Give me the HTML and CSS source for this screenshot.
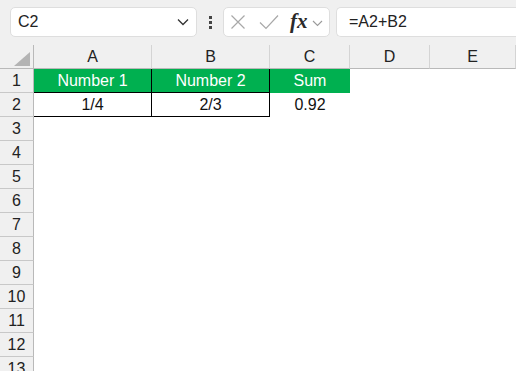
FILE: index.html
```html
<!DOCTYPE html>
<html>
<head>
<meta charset="utf-8">
<link rel="stylesheet" href="styles.css">
</head>
<body>
<div class="app">
  <div class="toolbar">
    <div class="namebox">
      <span class="ref">C2</span>
      <svg class="chev" width="12" height="8" viewBox="0 0 12 8"><path d="M1 1.5 L6 6.5 L11 1.5" fill="none" stroke="#333" stroke-width="1.3"/></svg>
    </div>
    <div class="dots"><i></i><i></i><i></i></div>
    <div class="fxbox">
      <svg class="ico" width="16" height="16" viewBox="0 0 16 16"><path d="M1.5 1.5 L14.5 14.5 M14.5 1.5 L1.5 14.5" stroke="#a8a8a8" stroke-width="1.2" fill="none"/></svg>
      <svg class="ico" width="20" height="16" viewBox="0 0 20 16"><path d="M1 8.5 L7 14.5 L19 1.5" stroke="#a8a8a8" stroke-width="1.2" fill="none"/></svg>
      <span class="fx">fx</span>
      <svg class="chev2" width="11" height="7" viewBox="0 0 11 7"><path d="M1 1 L5.5 5.5 L10 1" fill="none" stroke="#9a9a9a" stroke-width="1.1"/></svg>
    </div>
    <div class="formula">=A2+B2</div>
  </div>
  <div class="sheet">
    <div class="hdr corner"><span class="tri"></span></div>
    <div class="hdr col">A</div>
    <div class="hdr col">B</div>
    <div class="hdr col">C</div>
    <div class="hdr col">D</div>
    <div class="hdr col">E</div>
    <div class="hdr col last"></div>

    <div class="hdr row">1</div>
    <div class="cell green bd">Number 1</div>
    <div class="cell green bd">Number 2</div>
    <div class="cell green">Sum</div>
    <div class="cell"></div>
    <div class="cell"></div>
    <div class="cell"></div>

    <div class="hdr row">2</div>
    <div class="cell bd">1/4</div>
    <div class="cell bd">2/3</div>
    <div class="cell">0.92</div>
    <div class="cell"></div>
    <div class="cell"></div>
    <div class="cell"></div>
  </div>
  <div class="rest">
    <div class="hdr row">3</div>
    <div class="hdr row">4</div>
    <div class="hdr row">5</div>
    <div class="hdr row">6</div>
    <div class="hdr row">7</div>
    <div class="hdr row">8</div>
    <div class="hdr row">9</div>
    <div class="hdr row">10</div>
    <div class="hdr row">11</div>
    <div class="hdr row">12</div>
    <div class="hdr row">13</div>
  </div>
</div>
</body>
</html>
```
FILE: styles.css
```css
html, body {
  margin: 0;
  padding: 0;
  background: #ffffff;
  overflow: hidden;
}
.app {
  width: 516px;
  height: 371px;
  overflow: hidden;
  font-family: "Liberation Sans", Arial, sans-serif;
  color: #1a1a1a;
}
.toolbar {
  height: 45px;
  box-sizing: border-box;
  background: #f0f0f0;
  display: flex;
  align-items: flex-start;
  padding-top: 7px;
  padding-left: 10px;
}
.namebox {
  width: 187px;
  height: 30px;
  box-sizing: border-box;
  background: #fff;
  border: 1px solid #dedede;
  border-radius: 5px;
  display: flex;
  align-items: center;
  justify-content: space-between;
  padding: 0 7px 0 7px;
}
.ref {
  font-size: 16px;
  color: #222;
}
.chev {
  display: block;
}
.dots {
  width: 26px;
  height: 30px;
  display: flex;
  flex-direction: column;
  align-items: center;
  justify-content: center;
  gap: 2px;
}
.dots i {
  width: 3px;
  height: 3px;
  background: #444;
}
.fxbox {
  width: 107px;
  height: 30px;
  box-sizing: border-box;
  background: #fff;
  border: 1px solid #dedede;
  border-radius: 5px;
  display: flex;
  align-items: center;
  padding-left: 6px;
}
.fxbox .ico {
  display: block;
  margin-right: 13px;
}
.fxbox .ico + .ico {
  margin-right: 11px;
}
.fx {
  font-family: "Liberation Serif", "Times New Roman", serif;
  font-style: italic;
  font-weight: bold;
  font-size: 21px;
  color: #2a2a2a;
  margin-right: 4px;
  margin-top: -1px;
}
.chev2 {
  display: block;
  margin-top: 2px;
}
.formula {
  flex: 1;
  margin-left: 6px;
  height: 30px;
  box-sizing: border-box;
  background: #fff;
  border: 1px solid #dedede;
  border-right: none;
  border-radius: 5px 0 0 5px;
  display: flex;
  align-items: center;
  padding-left: 12px;
  font-size: 16px;
  color: #222;
}
.sheet {
  display: grid;
  grid-template-columns: 34px 118px 118px 80px 80px 86px 1fr;
  grid-auto-rows: 24px;
}
.hdr {
  background: #f0f0f0;
  box-sizing: border-box;
  display: flex;
  align-items: center;
  justify-content: center;
  font-size: 16px;
  color: #222;
}
.hdr.col {
  border-right: 1px solid #d4d4d4;
  border-bottom: 1px solid #b9b9b9;
  padding-top: 1px;
}
.hdr.col.last {
  border-right: none;
}
.corner {
  border-right: 1px solid #b9b9b9;
  border-bottom: 1px solid #b9b9b9;
  justify-content: flex-end;
  align-items: flex-end;
  padding: 0 3px 2px 0;
}
.tri {
  width: 0;
  height: 0;
  border-left: 16px solid transparent;
  border-bottom: 14px solid #b4b4b4;
}
.hdr.row {
  width: 34px;
  height: 24px;
  border-right: 1px solid #b9b9b9;
  border-bottom: 1px solid #c8c8c8;
}
.cell {
  box-sizing: border-box;
  display: flex;
  align-items: center;
  justify-content: center;
  font-size: 16px;
  color: #111;
  background: #fff;
}
.cell.green {
  background: #00b050;
  color: #ffffff;
}
.cell.bd {
  border-right: 1px solid #000;
  border-bottom: 1px solid #000;
}
.rest {
  display: flex;
  flex-direction: column;
}
```
